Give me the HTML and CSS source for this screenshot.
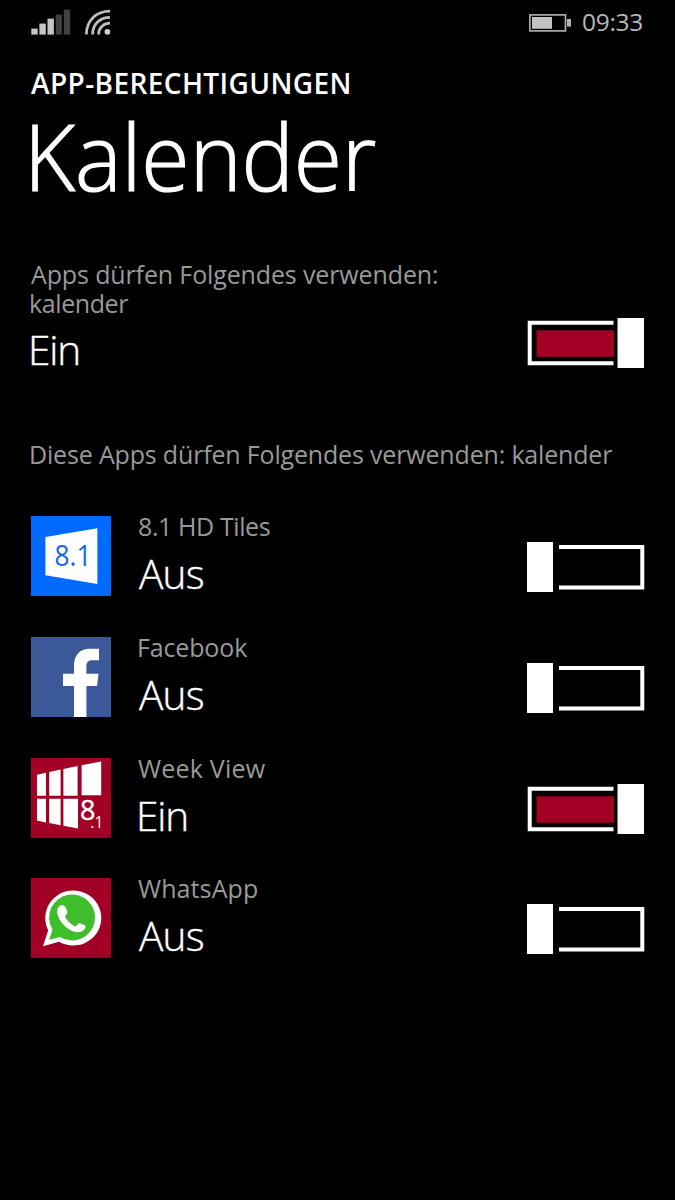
FILE: index.html
```html
<!DOCTYPE html>
<html lang="de">
<head>
<meta charset="utf-8">
<title>App-Berechtigungen</title>
<link rel="stylesheet" href="styles.css">
</head>
<body>
<div class="statusbar">
  <svg class="signal" width="40" height="26" viewBox="0 0 40 26">
    <g fill="#c4c4c4"><rect x="0.3" y="19.6" width="6.4" height="6"/><rect x="8.4" y="14.6" width="6.4" height="11"/><rect x="16.5" y="9.6" width="6.4" height="16"/></g>
    <g fill="#424242"><rect x="24.8" y="5.6" width="6" height="20"/><rect x="32.8" y="0.6" width="6.4" height="25"/></g>
  </svg>
  <svg class="wifi" width="26" height="26" viewBox="0 0 26 26">
    <g fill="none" stroke="#bdbdbd" stroke-width="2.8"><path d="M1.4 25.4C1.4 11.5 11.5 2.2 25 2.2"/><path d="M7.6 25.4C7.6 15 15 8.3 25 8.3"/><path d="M13.6 25.4C13.6 19 18.2 14.2 25 14.2"/></g>
    <circle cx="22.4" cy="22.8" r="2.9" fill="#d0d0d0"/>
  </svg>
  <svg class="battery" width="43" height="18" viewBox="0 0 43 18">
    <rect x="0.9" y="0.9" width="35.6" height="16" fill="none" stroke="#b4b4b4" stroke-width="1.6"/>
    <rect x="3" y="3" width="20" height="11.8" fill="#c2c2c2"/><rect x="38" y="5" width="4" height="7.6" fill="#b4b4b4"/>
  </svg>
  <span class="time">09:33</span>
</div>
<header class="header">
  <div class="app-title">APP-BERECHTIGUNGEN</div>
  <h1 class="page-title">Kalender</h1>
</header>
<main class="content">
  <section class="row master">
    <div class="text">
      <div class="label l-main">Apps dürfen Folgendes verwenden:</div>
      <div class="label l-second">kalender</div>
      <div class="value ein">Ein</div>
    </div>
    <svg class="toggle" width="118" height="50" viewBox="0 0 118 50"><path d="M86.5 4.7H2.7V45.3H86.5" fill="none" stroke="#fff" stroke-width="4"/><rect x="9.5" y="12.3" width="77.5" height="26.5" fill="#a20025"/><rect x="90.5" width="26.5" height="50" fill="#fff"/></svg>
  </section>
  <p class="label section">Diese Apps dürfen Folgendes verwenden: kalender</p>
  <section class="row">
    <svg class="tile" width="80" height="80" viewBox="0 0 80 80"><path fill="#006aff" d="M0 0h80v80H0z"/><path fill="#fff" d="M14.4 21 66.4 12.3V68L14.4 59.3z"/><text class="tile-text hd" x="23.5" y="50.3" textLength="37" lengthAdjust="spacingAndGlyphs">8.1</text></svg>
    <div class="text"><div class="label l-hd">8.1 HD Tiles</div><div class="value aus">Aus</div></div>
    <svg class="toggle" width="118" height="50" viewBox="0 0 118 50"><path d="M32 4.9H115.3V45.5H32" fill="none" stroke="#fff" stroke-width="4"/><rect width="26" height="50" fill="#fff"/></svg>
  </section>
  <section class="row">
    <svg class="tile" width="80" height="80" viewBox="0 0 80 80"><path fill="#3b5998" d="M0 0h80v80H0z"/><path fill="#fff" d="M43 80V49H32V36.7H43V29C43 18 49 11.8 58.5 11.8H68V23.2H61C57 23.2 55.4 25.5 55.4 29V36.7H67.5L66 49H55.4V80z"/></svg>
    <div class="text"><div class="label l-fb">Facebook</div><div class="value aus">Aus</div></div>
    <svg class="toggle" width="118" height="50" viewBox="0 0 118 50"><path d="M32 4.9H115.3V45.5H32" fill="none" stroke="#fff" stroke-width="4"/><rect width="26" height="50" fill="#fff"/></svg>
  </section>
  <section class="row">
    <svg class="tile" width="80" height="80" viewBox="0 0 80 80"><path fill="#a20025" d="M0 0h80v80H0z"/><path fill="#fff" d="M6 16.7 15 14.7V37.7H6zM18.2 14 29.6 11.6V37.7H18.2zM32.4 11 46.6 8V37.7H32.4zM50.6 7.3 70.2 3.5V37.2H50.6zM6 40.8H15V64.4L6 62.4zM18.2 40.8H29.6V67.3L18.2 65zM32.4 40.8H47V70.6L32.4 67.7z"/><text class="tile-text eight" x="49" y="61.5">8</text><text class="tile-text one" x="59.3" y="70" textLength="13" lengthAdjust="spacingAndGlyphs">.1</text></svg>
    <div class="text"><div class="label l-wv">Week View</div><div class="value ein ein-row">Ein</div></div>
    <svg class="toggle" width="118" height="50" viewBox="0 0 118 50"><path d="M86.5 4.7H2.7V45.3H86.5" fill="none" stroke="#fff" stroke-width="4"/><rect x="9.5" y="12.3" width="77.5" height="26.5" fill="#a20025"/><rect x="90.5" width="26.5" height="50" fill="#fff"/></svg>
  </section>
  <section class="row">
    <svg class="tile" width="80" height="80" viewBox="0 0 80 80"><path fill="#a20025" d="M0 0h80v80H0z"/><path fill="#fff" d="M12 68.2 17.2 52.3A28 27.5 0 1 1 28 63.7z"/><path fill="#3fbd2c" d="M18.2 61.8 21.5 51.5A23 23 0 1 1 29 59z"/><path fill="#fff" d="M28.5 28C31 26 33.5 26.8 34.6 29.5L36.3 33.5C37 35.3 34.5 37.3 34 38.5C36 43 40 46.7 44.3 48.6C46 47.3 47.5 44.8 49.3 45.2L54.5 47.8C55 52 50.5 54.6 45.5 54.1C36 52.5 27.5 43.5 26.2 34.5C26.1 31.5 27 29.3 28.5 28z"/></svg>
    <div class="text"><div class="label l-wa">WhatsApp</div><div class="value aus">Aus</div></div>
    <svg class="toggle" width="118" height="50" viewBox="0 0 118 50"><path d="M32 4.9H115.3V45.5H32" fill="none" stroke="#fff" stroke-width="4"/><rect width="26" height="50" fill="#fff"/></svg>
  </section>
</main>
</body>
</html>
```
FILE: styles.css
```css
* { box-sizing: border-box; }
body { margin: 0; min-height: 1200px; background: #000; color: #fff; font-family: "Open Sans", "Noto Sans", sans-serif; }
svg { display: block; flex: none; }
.statusbar { display: flex; height: 64px; padding: 0 31px; }
.signal { margin-top: 9px; }
.wifi { margin: 9px 0 0 14px; }
.battery { margin: 14px 0 0 auto; }
.time { width: 62px; margin-left: 10px; padding-top: 6px; font-size: 24.5px; line-height: 32px; letter-spacing: -0.3px; color: #b8b8b8; white-space: nowrap; }
.header { padding-left: 31px; white-space: nowrap; }
.app-title { padding-top: 1px; font-size: 28px; line-height: 37px; font-weight: 600; letter-spacing: 0.4px; }
.page-title { width: max-content; margin: 0 0 0 -9px; padding: 1px 0 0 2px; font-size: 92px; line-height: 105px; font-weight: 300; transform: scaleX(0.955); transform-origin: left; -webkit-text-stroke: 1.2px #fff; }
.content { padding: 52px 30px 0 31px; }
.row { display: flex; height: 120.67px; }
.text { flex: 1; white-space: nowrap; }
.label { font-size: 25px; line-height: 29px; color: #999; }
.value { margin-top: 8px; font-size: 40.5px; line-height: 50px; font-weight: 300; -webkit-text-stroke: 0.4px #fff; }
.ein { margin-left: -3px; letter-spacing: -1.1px; }
.ein-row { margin-left: -1px; }
.aus { margin-left: 2px; letter-spacing: -0.7px; }
.l-main { letter-spacing: -0.13px; }
.l-second { margin-left: -2px; letter-spacing: -0.4px; }
.master .value { margin-top: 7px; }
.l-hd { margin-left: 1px; letter-spacing: -0.4px; }
.l-fb { letter-spacing: -0.15px; }
.l-wv { margin-left: 1px; letter-spacing: 0.2px; }
.l-wa { margin-left: 1px; letter-spacing: 0.1px; }
.tile { margin: 4px 26px 0 0; }
.toggle { margin: 30px 0 0; width: 118px; }
.master { height: 180px; }
.master .toggle { margin-top: 57.5px; }
.section { margin: 0 0 43.3px -2px; white-space: nowrap; letter-spacing: -0.17px; }
.tile-text { font-family: "Open Sans", sans-serif; }
.hd { font-size: 29px; fill: #1766dc; }
.eight { font-size: 27px; fill: #fff; stroke: #fff; stroke-width: 0.4px; }
.one { font-size: 17px; fill: #fff; }
```
